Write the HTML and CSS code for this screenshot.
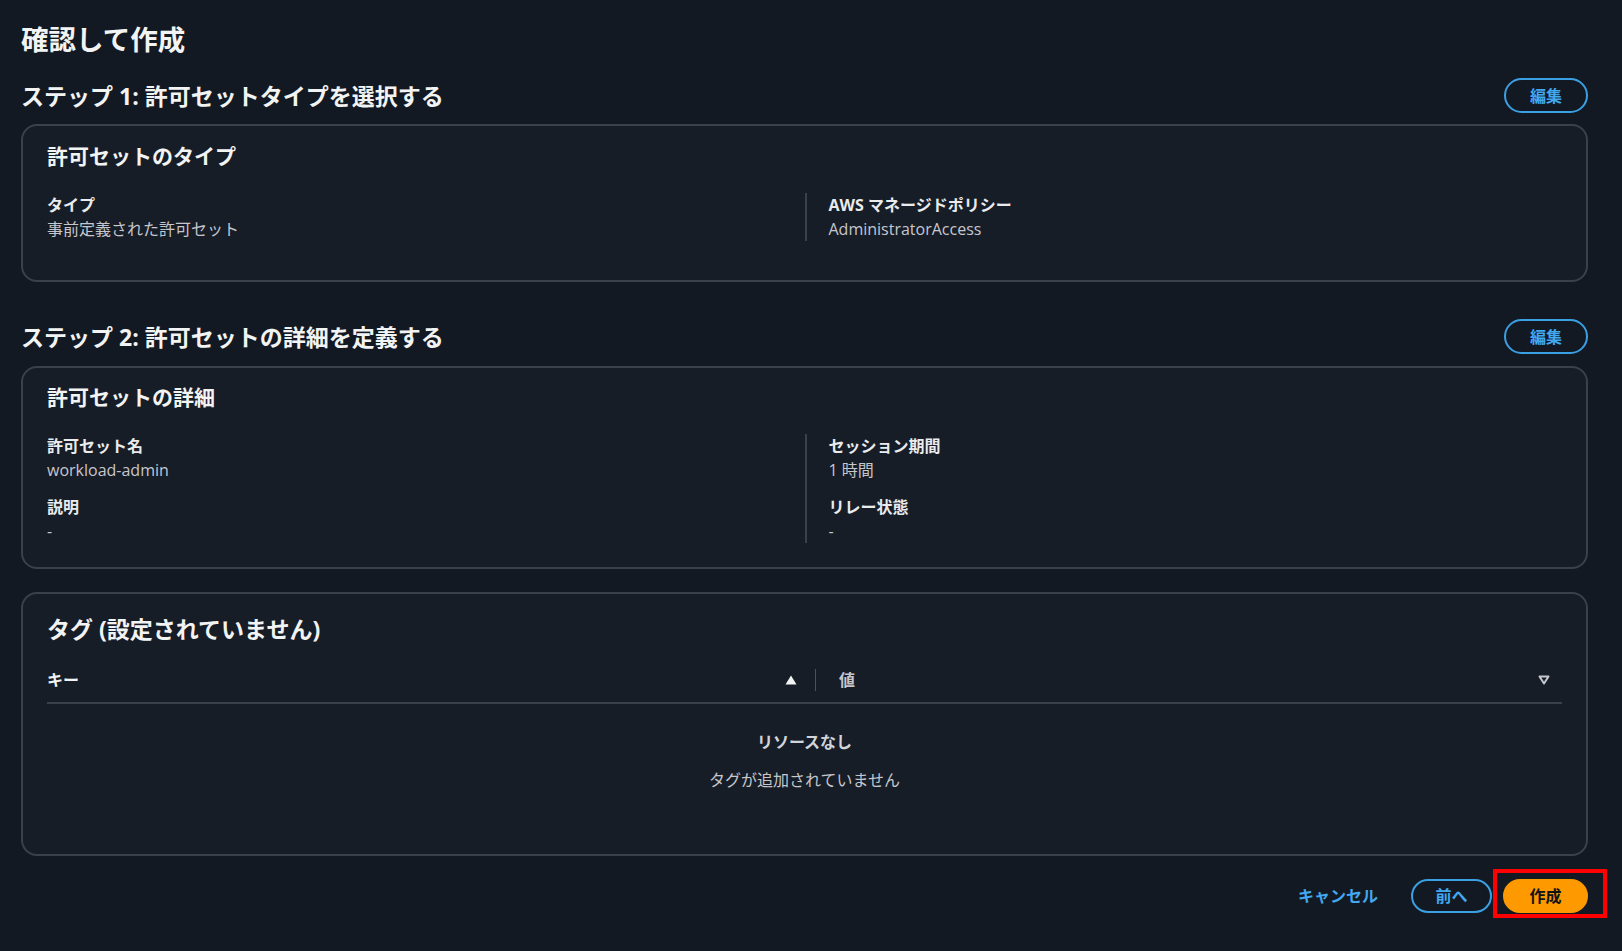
FILE: index.html
```html
<!DOCTYPE html>
<html lang="ja">
<head>
<meta charset="utf-8">
<title>確認して作成</title>
<link rel="stylesheet" href="styles.css">
</head>
<body>
<main class="page">
  <h1 class="page-title">確認して作成</h1>

  <section class="step">
    <div class="step-header">
      <h2 class="step-title">ステップ 1: 許可セットタイプを選択する</h2>
      <button class="btn btn-normal btn-edit">編集</button>
    </div>
    <div class="card card--type">
      <h3 class="card-title">許可セットのタイプ</h3>
      <div class="kv-grid">
        <div class="kv-col">
          <div class="kv">
            <div class="kv-label">タイプ</div>
            <div class="kv-value">事前定義された許可セット</div>
          </div>
        </div>
        <div class="kv-col kv-col--right">
          <div class="kv">
            <div class="kv-label">AWS マネージドポリシー</div>
            <div class="kv-value">AdministratorAccess</div>
          </div>
        </div>
      </div>
    </div>
  </section>

  <section class="step step--second">
    <div class="step-header">
      <h2 class="step-title">ステップ 2: 許可セットの詳細を定義する</h2>
      <button class="btn btn-normal btn-edit">編集</button>
    </div>
    <div class="card card--details">
      <h3 class="card-title">許可セットの詳細</h3>
      <div class="kv-grid">
        <div class="kv-col">
          <div class="kv">
            <div class="kv-label">許可セット名</div>
            <div class="kv-value">workload-admin</div>
          </div>
          <div class="kv">
            <div class="kv-label">説明</div>
            <div class="kv-value">-</div>
          </div>
        </div>
        <div class="kv-col kv-col--right">
          <div class="kv">
            <div class="kv-label">セッション期間</div>
            <div class="kv-value">1 時間</div>
          </div>
          <div class="kv">
            <div class="kv-label">リレー状態</div>
            <div class="kv-value">-</div>
          </div>
        </div>
      </div>
    </div>
  </section>

  <section class="card card--tags">
    <h2 class="tags-title">タグ (設定されていません)</h2>
    <div class="table-head">
      <div class="th th--key">
        <span>キー</span>
        <svg class="sort-icon" width="12" height="10" viewBox="0 0 12 10"><polygon points="6,0.5 11.5,9.5 0.5,9.5" fill="#f2f3f3"/></svg>
      </div>
      <div class="th th--value">
        <span>値</span>
        <svg class="sort-icon" width="12" height="10" viewBox="0 0 12 10"><polygon points="1.5,1.5 10.5,1.5 6,8.5" fill="none" stroke="#c6c6cd" stroke-width="2" stroke-linejoin="round"/></svg>
      </div>
    </div>
    <div class="empty">
      <div class="empty-title">リソースなし</div>
      <div class="empty-text">タグが追加されていません</div>
    </div>
  </section>

  <footer class="actions">
    <button class="btn btn-link">キャンセル</button>
    <button class="btn btn-normal btn-prev">前へ</button>
    <div class="primary-wrap">
      <button class="btn btn-primary">作成</button>
      <div class="highlight-box"></div>
    </div>
  </footer>
</main>
</body>
</html>
```

FILE: styles.css
```css
* { box-sizing: border-box; }

html, body {
  margin: 0;
  padding: 0;
  background: #131922;
}

body {
  font-family: "Open Sans", "Noto Sans CJK JP", sans-serif;
  color: #e9ebed;
  width: 1622px;
  height: 951px;
  overflow: hidden;
}

.page {
  padding: 23px 34px 0 21px;
}

.page-title {
  margin: 0;
  font-size: 27.5px;
  line-height: 34px;
  font-weight: 700;
  color: #f2f3f3;
}

.step {
  margin-top: 21px;
}

.step--second {
  margin-top: 37px;
}

.step-header {
  display: flex;
  align-items: center;
  justify-content: space-between;
  height: 35px;
  margin-bottom: 11px;
}

.step--second .step-header {
  margin-bottom: 12px;
}

.step-title {
  margin: 0;
  font-size: 23px;
  line-height: 30px;
  font-weight: 700;
  color: #f2f3f3;
}

.card {
  background: #161d27;
  border: 2px solid #3b414b;
  border-radius: 16px;
  padding: 17px 24px 23px 24px;
}

.card--type {
  padding-bottom: 39px;
}

.card--details {
  padding-top: 16px;
  padding-bottom: 24px;
}

.card--tags {
  margin-top: 23px;
  padding: 20px 24px 62px 24px;
}

.card-title {
  margin: 0;
  font-size: 21px;
  line-height: 26px;
  font-weight: 700;
  color: #f2f3f3;
}

.kv-grid {
  margin-top: 24px;
  display: grid;
  grid-template-columns: 1fr 1fr;
}

.kv-col {
  display: flex;
  flex-direction: column;
  gap: 13px;
}

.kv-col--right {
  border-left: 2px solid #3b414b;
  padding-left: 22px;
}

.kv-label {
  font-size: 16px;
  line-height: 24px;
  font-weight: 700;
  color: #e9ebed;
}

.kv-value {
  font-size: 16px;
  line-height: 24px;
  color: #c6c6cd;
}

.tags-title {
  margin: 0;
  font-size: 23px;
  line-height: 30px;
  font-weight: 700;
  color: #f2f3f3;
}

.table-head {
  margin-top: 13px;
  padding: 12px 0 11px 0;
  border-bottom: 2px solid #3b414b;
  display: grid;
  grid-template-columns: 768px 1fr;
}

.th {
  display: flex;
  align-items: center;
  justify-content: space-between;
  height: 22px;
  font-size: 16px;
  line-height: 22px;
  font-weight: 700;
}

.th--key {
  padding-right: 18px;
  color: #f2f3f3;
}

.th--value {
  border-left: 1px solid #4b515c;
  padding-left: 23px;
  padding-right: 12px;
  color: #c6c6cd;
}

.sort-icon {
  display: block;
}

.empty {
  padding-top: 26px;
  text-align: center;
}

.empty-title {
  font-size: 16px;
  line-height: 24px;
  font-weight: 700;
  color: #d1d5db;
}

.empty-text {
  margin-top: 14px;
  font-size: 16px;
  line-height: 24px;
  color: #c6c6cd;
}

.actions {
  margin-top: 23px;
  display: flex;
  justify-content: flex-end;
  align-items: center;
  gap: 11px;
}

.btn {
  font-family: "Open Sans", "Noto Sans CJK JP", sans-serif;
  font-size: 16px;
  font-weight: 700;
  line-height: 20px;
  border-radius: 20px;
  cursor: pointer;
  display: inline-flex;
  align-items: center;
  justify-content: center;
}

.btn-normal {
  background: transparent;
  border: 2px solid #3a9fe3;
  color: #42a8f0;
  height: 35px;
}

.btn-edit {
  width: 84px;
  padding: 0;
}

.btn-prev {
  width: 81px;
  height: 34px;
  padding: 0;
}

.btn-link {
  background: transparent;
  border: none;
  color: #42a8f0;
  height: 34px;
  padding: 0 22px 0 0;
}

.primary-wrap {
  position: relative;
  display: flex;
}

.btn-primary {
  background: #ff9900;
  border: 2px solid #ff9900;
  color: #0f141a;
  width: 85px;
  height: 34px;
  padding: 0;
}

.highlight-box {
  position: absolute;
  top: -10px;
  left: -10px;
  right: -19px;
  bottom: -5px;
  border: 4px solid #ff0000;
  pointer-events: none;
}
```
